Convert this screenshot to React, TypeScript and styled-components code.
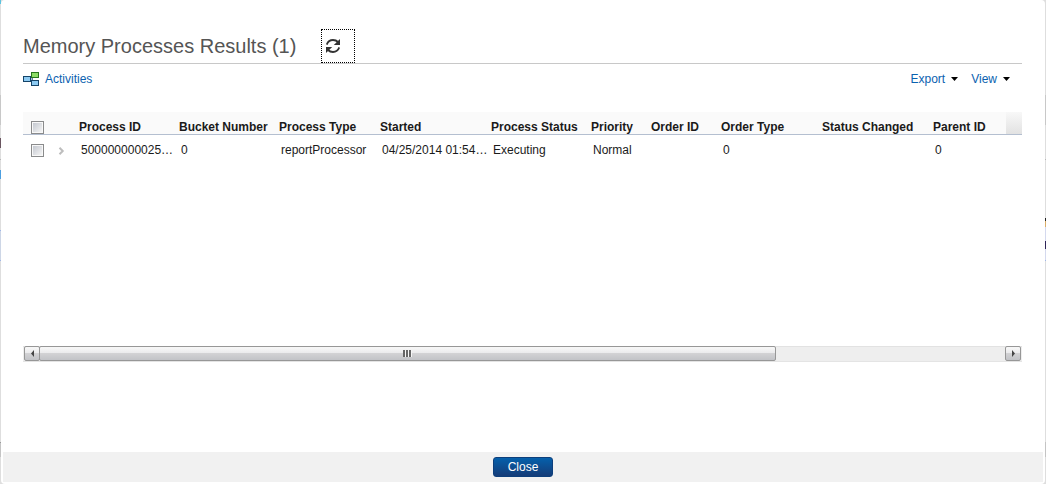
import React from "react";
import styled, { createGlobalStyle } from "styled-components";

const GlobalStyle = createGlobalStyle`
  * { box-sizing: border-box; }
  body {
    margin: 0;
    font-family: "Liberation Sans", Arial, sans-serif;
    font-size: 12px;
    line-height: 16px;
    color: #1a1a1a;
    background: #fff;
  }
`;

const Backdrop = styled.div`
  min-height: 100vh;
  display: flex;
  padding: 0 1px;
  background: linear-gradient(
    #5cc4e0 0 4px, #dedede 4px 95px, #c8c8c8 95px 125px, #dedede 125px 138px,
    #6a5560 138px 148px, #dedede 148px 159px, #b8b8b8 159px 160px,
    #dedede 160px 170px, #4c9fe0 170px 179px, #dedede 179px 230px,
    #9fb6e8 230px 231px, #cdd6e6 231px 260px, #9fb6e8 260px 261px,
    #dedede 261px 442px, #999 442px 443px, #c4c4c4 443px 457px, #dedede 457px
  ) left / 1px 100% no-repeat,
  linear-gradient(
    #dedede 0 95px, #c8c8c8 95px 125px, #dedede 125px 159px,
    #b8b8b8 159px 160px, #dedede 160px 218px, #222 218px 221px,
    #dcae66 221px 227px, #d4d9ee 227px 241px, #2e2458 241px 249px,
    #d4d9ee 249px 260px, #9fb6e8 260px 261px, #dedede 261px 442px,
    #c4c4c4 442px 457px, #dedede 457px
  ) right / 1px 100% no-repeat, #dedede;
`;

const Dialog = styled.section`
  flex: 1;
  min-width: 0;
  display: flex;
  flex-direction: column;
  padding: 0 2px 2px;
  background: #fff;
  border-radius: 4px;
`;

const Content = styled.div`
  padding: 28px 21px 24px 20px;
`;

const TitleBar = styled.header`
  display: flex;
  align-items: center;
  gap: 25px;
  height: 36px;
  border-bottom: 1px solid #c8c8c8;
`;

const Title = styled.h1`
  margin: 0;
  font-size: 20px;
  line-height: 24px;
  font-weight: 400;
  color: #555;
`;

const RefreshButton = styled.button`
  display: flex;
  align-items: center;
  width: 34px;
  height: 34px;
  padding: 0 4px;
  border: 1px dotted #000;
  background: none;
  color: #333;
`;

const Toolbar = styled.nav`
  display: flex;
  align-items: center;
  justify-content: space-between;
  height: 30px;
`;

const ToolLink = styled.a`
  display: inline-flex;
  align-items: center;
  gap: 6px;
  color: #0b62b0;
  text-decoration: none;
`;

const Menus = styled.div`
  display: flex;
  gap: 13px;
  padding-right: 12px;
`;

const MenuButton = styled.button`
  display: flex;
  align-items: center;
  gap: 6px;
  padding: 0;
  border: 0;
  background: none;
  color: #0b62b0;
  font: inherit;
`;

const GridPane = styled.div`
  min-height: 234px;
  margin-top: 18px;
  overflow: hidden;
`;

const Table = styled.table`
  width: 100%;
  table-layout: fixed;
  border-collapse: separate;
  border-spacing: 0;
`;

const Col = styled.col<{ $width?: number }>`
  width: ${(p) => (p.$width ? `${p.$width}px` : "auto")};
`;

const HeadCell = styled.th<{ $filler?: boolean }>`
  height: 23px;
  padding: 8px 0 0 4px;
  border-bottom: 1px solid #b4bfd0;
  background: ${(p) => (p.$filler ? "linear-gradient(#f8f8f8, #e2e2e2)" : "#fafafa")};
  line-height: 14px;
  text-align: left;
  vertical-align: top;
  font-weight: 700;
  white-space: nowrap;
`;

const Cell = styled.td`
  height: 30px;
  padding: 0 0 0 6px;
  white-space: nowrap;
`;

const Check = styled.input`
  appearance: none;
  display: block;
  width: 13px;
  height: 13px;
  margin: 0;
  padding: 1px;
  border: 1px solid #8a8b8c;
  background: linear-gradient(135deg, #c4c8d0, #f4f4f4) content-box, #f8f8f8;
`;

const HeadCheck = styled(Check)`
  margin: 1px 0 0 4px;
`;

const RowCheck = styled(Check)`
  margin-left: 2px;
`;

const Expander = styled.button`
  display: block;
  margin-left: 1px;
  padding: 0;
  border: 0;
  background: none;
`;

const Scrollbar = styled.div`
  display: grid;
  grid-template-columns: 16px 1fr 16px;
  height: 16px;
  padding: 0 1px;
  border-bottom: 1px solid #e4e4e4;
  background: linear-gradient(#e2e2e2 0 1px, #eee 1px);
`;

const ScrollPart = styled.button`
  display: flex;
  align-items: center;
  justify-content: center;
  padding: 0;
  border: 1px solid #979797;
  border-radius: 2px;
  background: linear-gradient(#f6f6f6 0 10%, #e9e9eb 50%, #d2d2d4 50%, #c2c3c7);
`;

const Track = styled.div`
  display: grid;
  grid-template-columns: 737fr 229fr;
  margin-left: -1px;
`;

const Footer = styled.footer`
  display: flex;
  align-items: center;
  justify-content: center;
  height: 30px;
  margin-top: auto;
  background: #f1f1f1;
`;

const CloseButton = styled.button`
  width: 60px;
  height: 20px;
  padding: 0;
  border: 1px solid #0d3f7c;
  border-radius: 3px;
  background: linear-gradient(#0560ab, #153c78);
  color: #fff;
  font: inherit;
  line-height: 18px;
`;

const RefreshIcon = () => (
  <svg width="14" height="14" viewBox="0 0 14 14" aria-hidden="true">
    <path d="M.7 5.600C1.800 2.500 4.300 1 7 1C9 1 10.700 1.700 12 3" fill="none" stroke="currentColor" strokeWidth="1.800" />
    <path d="M14 0V6H7.800Z" fill="currentColor" />
    <path d="M13.300 8.400C12.200 11.500 9.700 13 7 13C5 13 3.300 12.300 2 11" fill="none" stroke="currentColor" strokeWidth="1.800" />
    <path d="M0 14V8H6.200Z" fill="currentColor" />
  </svg>
);

const ActivitiesIcon = () => (
  <svg width="16" height="14" viewBox="0 0 16 14" aria-hidden="true">
    <rect x="8.500" y=".5" width="7" height="5" fill="#8ddd66" stroke="#27751c" />
    <rect x=".5" y="4.500" width="7" height="5" fill="#8ccaf2" stroke="#154468" />
    <rect x="8.500" y="8.500" width="7" height="5" fill="#8ccaf2" stroke="#154468" />
    <path d="M8 7H10M9.500 6V8" stroke="#5c7f99" fill="none" />
  </svg>
);

const Caret = () => (
  <svg width="7" height="4" viewBox="0 0 7 4" aria-hidden="true">
    <path d="M0 0H7L3.500 4Z" fill="#000" />
  </svg>
);

const Chevron = () => (
  <svg width="7" height="8" viewBox="0 0 7 8" aria-hidden="true">
    <path d="M1.500 .8L4.700 4L1.500 7.200" stroke="#bdbdbd" strokeWidth="2" fill="none" />
  </svg>
);

const Arrow = ({ d }: { d: string }) => (
  <svg width="5" height="7" viewBox="0 0 5 7" aria-hidden="true">
    <path d={d} fill="#444" />
  </svg>
);

const Grip = () => (
  <svg width="9" height="7" viewBox="0 0 9 7" aria-hidden="true">
    <path d="M1 0V7M4 0V7M7 0V7" stroke="#666" strokeWidth="2" />
    <path d="M2.500 0V7M5.500 0V7M8.500 0V7" stroke="#f5f5f5" />
  </svg>
);

const columns: { label: string; width?: number; value: string }[] = [
  { label: "Process ID", width: 100, value: "500000000025…" },
  { label: "Bucket Number", width: 100, value: "0" },
  { label: "Process Type", width: 101, value: "reportProcessor" },
  { label: "Started", width: 111, value: "04/25/2014 01:54…" },
  { label: "Process Status", width: 100, value: "Executing" },
  { label: "Priority", width: 60, value: "Normal" },
  { label: "Order ID", width: 70, value: "" },
  { label: "Order Type", width: 101, value: "0" },
  { label: "Status Changed", width: 111, value: "" },
  { label: "Parent ID", value: "0" },
];

export default function App() {
  return (
    <>
      <GlobalStyle />
      <Backdrop>
        <Dialog>
          <Content>
            <TitleBar>
              <Title>Memory Processes Results (1)</Title>
              <RefreshButton aria-label="Refresh"><RefreshIcon /></RefreshButton>
            </TitleBar>
            <Toolbar>
              <ToolLink href="#activities"><ActivitiesIcon />Activities</ToolLink>
              <Menus>
                <MenuButton>Export<Caret /></MenuButton>
                <MenuButton>View<Caret /></MenuButton>
              </Menus>
            </Toolbar>
            <GridPane>
              <Table>
                <colgroup>
                  <Col $width={28} />
                  <Col $width={24} />
                  {columns.map((c) => <Col key={c.label} $width={c.width} />)}
                  <Col $width={16} />
                </colgroup>
                <thead>
                  <tr>
                    <HeadCell><HeadCheck type="checkbox" aria-label="Select all" /></HeadCell>
                    <HeadCell />
                    {columns.map((c) => <HeadCell key={c.label} scope="col">{c.label}</HeadCell>)}
                    <HeadCell $filler />
                  </tr>
                </thead>
                <tbody>
                  <tr>
                    <Cell><RowCheck type="checkbox" aria-label="Select process" /></Cell>
                    <Cell><Expander aria-label="Expand row"><Chevron /></Expander></Cell>
                    {columns.map((c) => <Cell key={c.label}>{c.value}</Cell>)}
                    <Cell />
                  </tr>
                </tbody>
              </Table>
            </GridPane>
            <Scrollbar>
              <ScrollPart aria-label="Scroll left"><Arrow d="M4 0V7L1 3.500Z" /></ScrollPart>
              <Track>
                <ScrollPart aria-label="Scroll position"><Grip /></ScrollPart>
              </Track>
              <ScrollPart aria-label="Scroll right"><Arrow d="M1 0V7L4 3.500Z" /></ScrollPart>
            </Scrollbar>
          </Content>
          <Footer>
            <CloseButton>Close</CloseButton>
          </Footer>
        </Dialog>
      </Backdrop>
    </>
  );
}
